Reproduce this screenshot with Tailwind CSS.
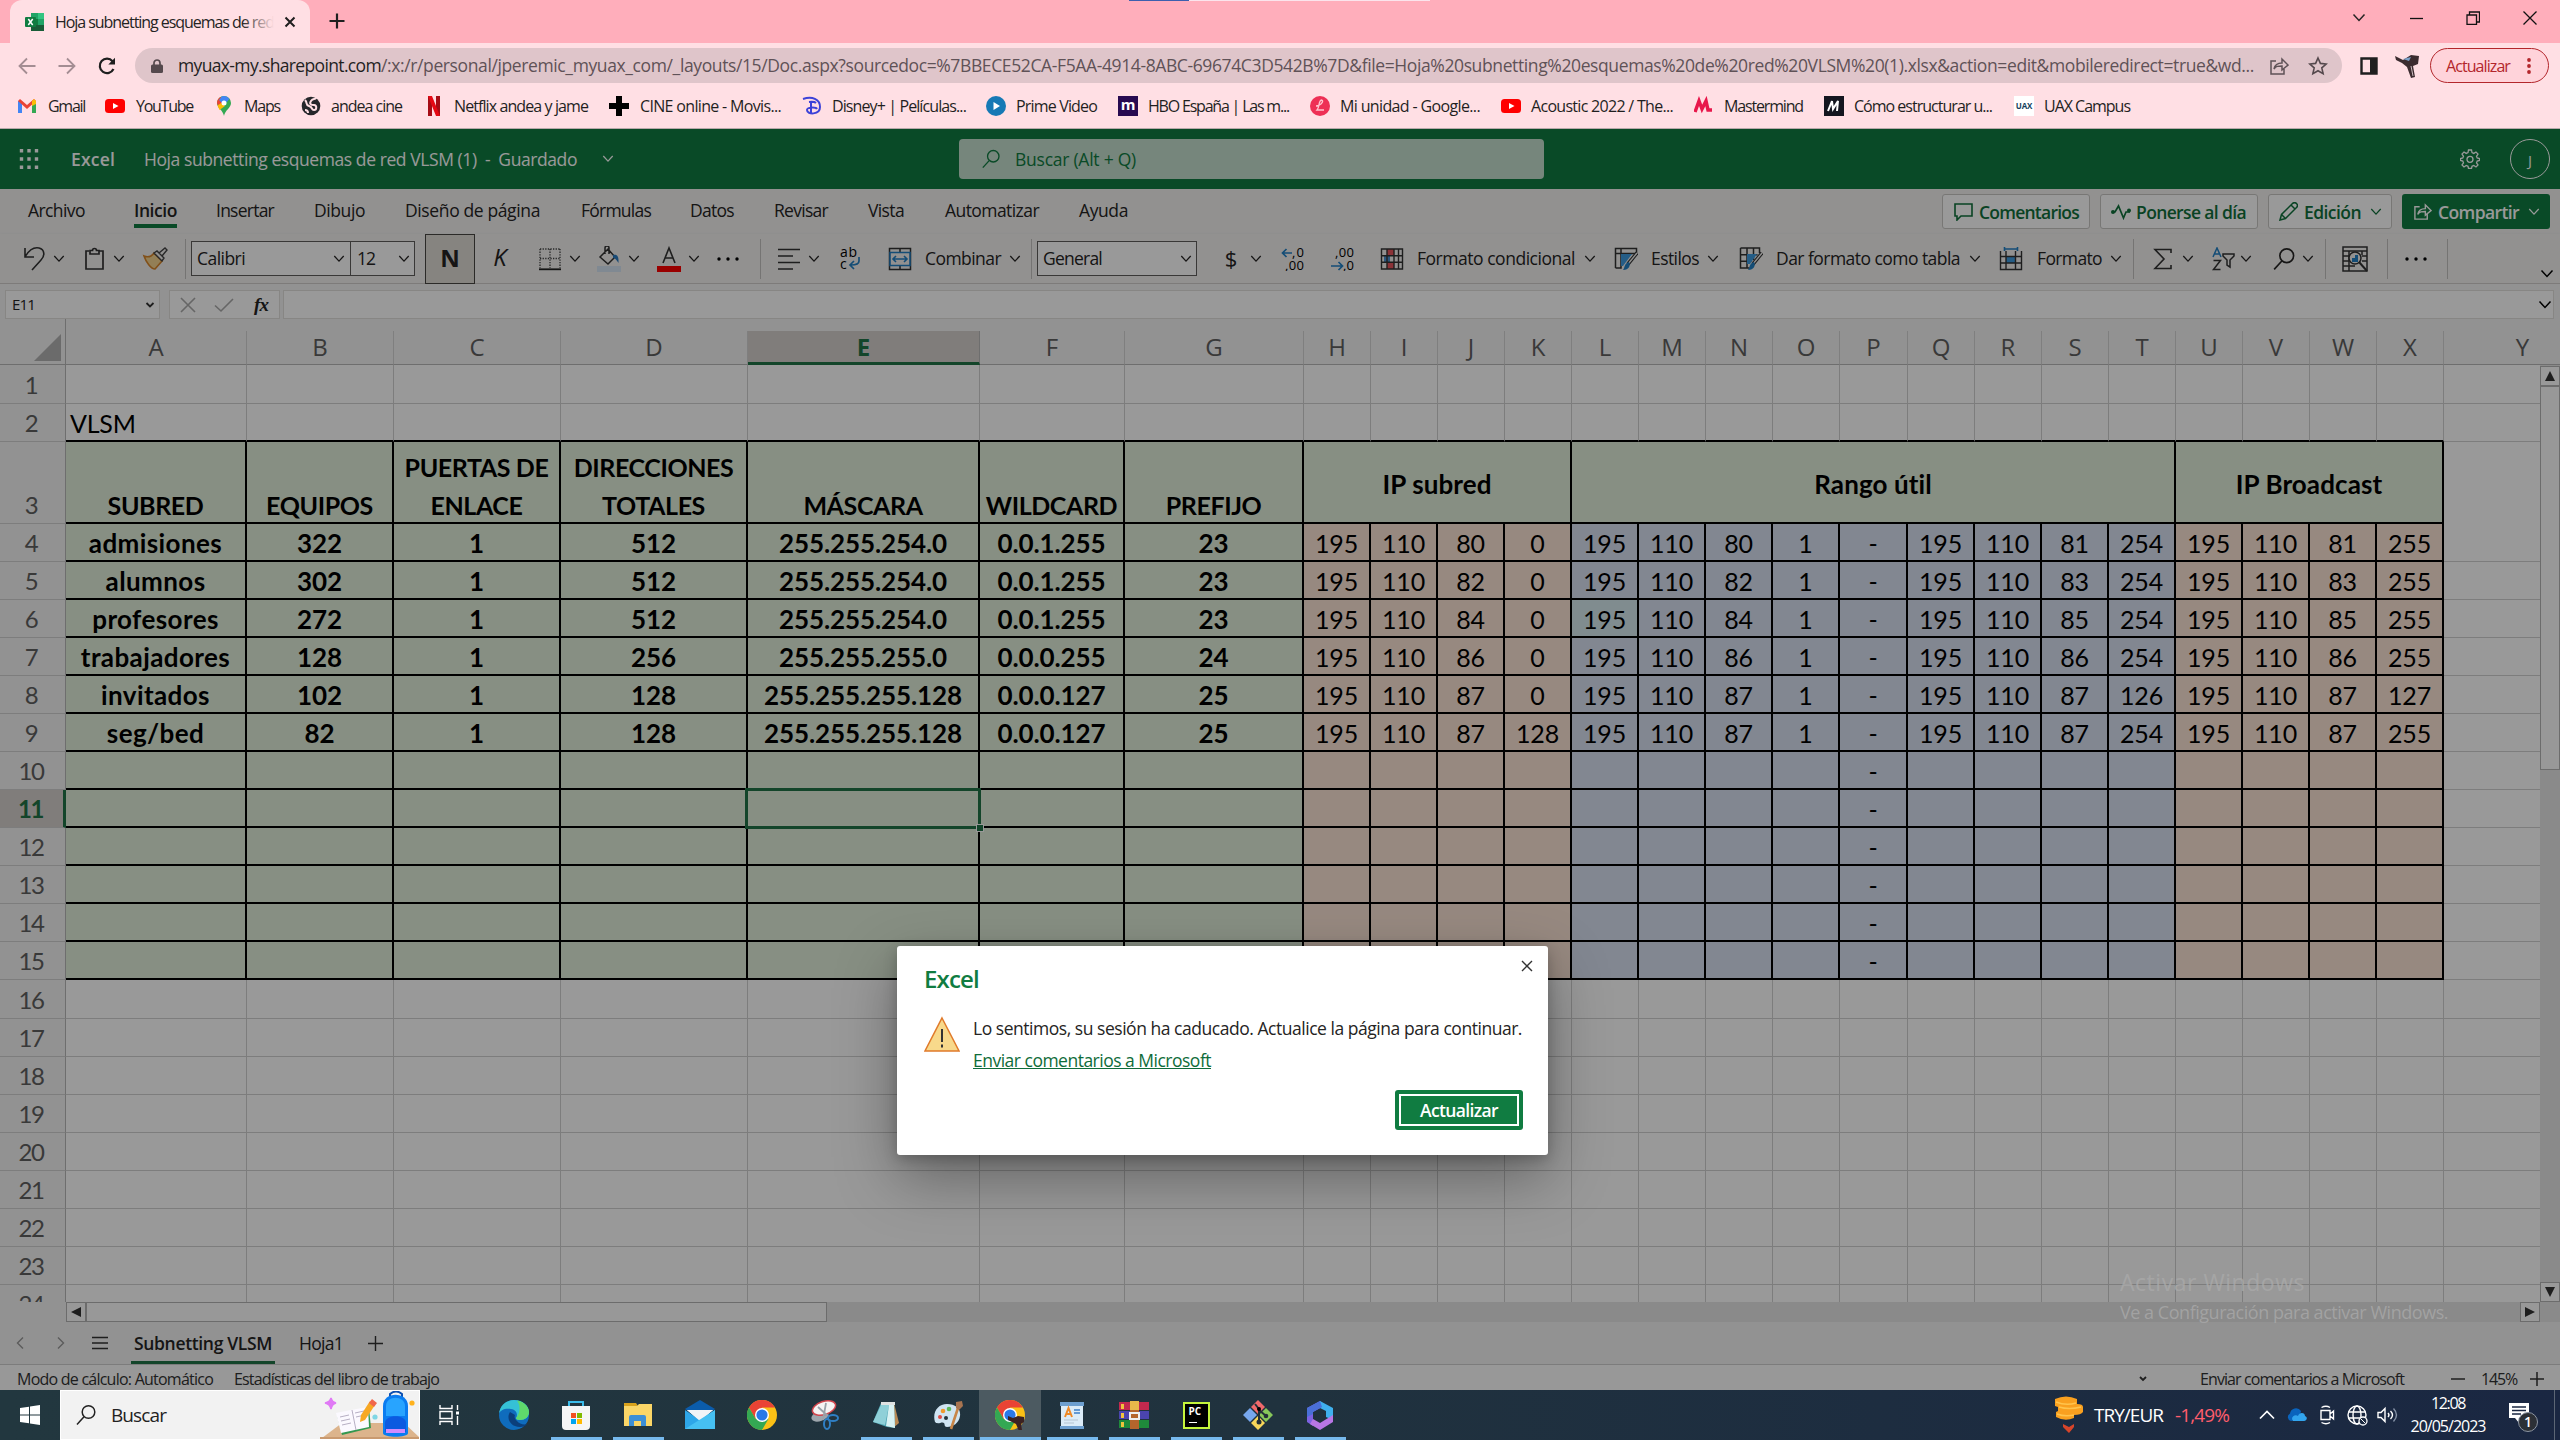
<!DOCTYPE html>
<html lang="es">
<head>
<meta charset="utf-8">
<title>Hoja subnetting esquemas de red VLSM (1)</title>
<script src="https://cdn.jsdelivr.net/npm/@tailwindcss/browser@4"></script>
</head>
<body class="w-[2560px] h-[1440px] overflow-hidden bg-white font-['Open_Sans','Noto_Sans',sans-serif] text-[17.5px] text-[#252423]">

<svg class="hidden">
  <symbol id="chev" viewBox="0 0 14 14"><path d="M1.5 3.5 7 9.5 12.5 3.5" fill="none" stroke="currentColor" stroke-width="1.5"/></symbol>
  <symbol id="share" viewBox="0 0 20 20"><path d="M7 5H2v13h13v-5M5 13c1-5 4-6 8-6V3l6 6-6 5v-4c-4 0-6 0-8 3z" fill="none" stroke="currentColor" stroke-width="1.5"/></symbol>
  <symbol id="mag" viewBox="0 0 22 22"><circle cx="13.5" cy="8" r="6.3" fill="none" stroke="currentColor" stroke-width="1.5"/><path d="M9 12.8 2 20.5" stroke="currentColor" stroke-width="1.5"/></symbol>
  <symbol id="tube" viewBox="0 0 20 20"><rect y="3" width="20" height="14" rx="3.5" fill="#f00"/><path d="M8 7l5.5 3L8 13z" fill="#fff"/></symbol>
  <symbol id="chrome" viewBox="0 0 30 30"><circle cx="15" cy="15" r="15" fill="#fbc116"/><path d="M2 7.5A15 15 0 0 1 28 7.5H15L8.5 19z" fill="#ea4335"/><path d="M2 7.5A15 15 0 0 0 15 30l6.5-11.3L8.5 18.7z" fill="#34a853"/><circle cx="15" cy="15" r="7" fill="#fff"/><circle cx="15" cy="15" r="5.6" fill="#2a79e8"/></symbol>
  <symbol id="paint" viewBox="0 0 24 24"><path d="M1.500 1h19v5M1.500 1v20h9M1.500 7.700h17M1.500 14.300h11M8 1v20M14.500 1v12" fill="none" stroke="#333" stroke-width="1.500"/><path d="M8 7h10l-7 10H8z" fill="#3f9be0"/><path d="M23 6 14 17" stroke="#333" stroke-width="3.600"/><path d="M23 6 14 17" stroke="#f3f2f1" stroke-width="1.400"/><path d="M15 15c2 3 0 8-6 8 2-2 1-7 6-8z" fill="#2280c5"/></symbol>
</svg>

<div class="relative flex h-full w-full flex-col [&_svg]:shrink-0">

<!-- Tab strip -->
<div class="flex h-[43px] shrink-0 bg-[#ffaebb] text-[16px] leading-[42px]">
  <div class="ml-[10px] flex w-[300px] items-center rounded-t-[12px] bg-[#ffdfe4]">
    <svg class="ml-[15px] h-5 w-5 shrink-0" viewBox="0 0 20 20"><path d="M6 1h13v18H6z" fill="#21a366"/><path d="M13 1h6v6h-6z" fill="#33c481"/><path d="M6 7h7v6H6z" fill="#107c41"/><path d="M13 13h6v6H6v-6z" fill="#185c37"/><rect y="5" width="11" height="10" rx="1" fill="#107c41"/><path d="M3.300 7l4.400 6M7.700 7l-4.400 6" stroke="#fff" stroke-width="1.500"/></svg>
    <div class="relative ml-[10px] w-[219px] overflow-hidden whitespace-nowrap"><span data-w="219">Hoja subnetting esquemas de red</span><div class="absolute inset-y-0 right-0 w-8 bg-linear-to-r from-transparent to-[#ffdfe4]"></div></div>
    <svg class="ml-[10px] h-3 w-3" viewBox="0 0 12 12"><path d="M1.500 1.500l9 9M10.500 1.500l-9 9" stroke="#1f1f1f" stroke-width="2"/></svg>
  </div>
  <svg class="mt-[13px] ml-[19px] h-4 w-4" viewBox="0 0 16 16"><path d="M8 .5v15M.5 8h15" stroke="#1f1f1f" stroke-width="2.200"/></svg>
  <div class="ml-[784px] h-px w-[60px] bg-[#3c5fae]"></div><div class="h-px w-[241px] bg-[#fbe4ec]"></div>
  <svg class="mt-[11px] ml-[922px] h-[14px] w-[14px]"><use href="#chev"/></svg>
  <svg class="mt-[11px] ml-[43px] h-[14px] w-[14px]" viewBox="0 0 14 14"><path d="M1 7.500h13" stroke="#111" stroke-width="1.300"/></svg>
  <svg class="mt-[11px] ml-[43px] h-[14px] w-[14px]" viewBox="0 0 14 14"><path d="M1 4h9.500v9.500H1zM3.500 4V1h10v10h-3" fill="none" stroke="#111" stroke-width="1.300"/></svg>
  <svg class="mt-[11px] ml-[43px] h-[14px] w-[14px]" viewBox="0 0 14 14"><path d="M.5.5l13 13M13.500.5l-13 13" stroke="#111" stroke-width="1.300"/></svg>
</div>

<!-- Address bar -->
<div class="flex h-[45px] shrink-0 items-center bg-[#ffdfe4] text-[#5f5257]">
  <svg class="ml-[18px] h-[18px] w-[18px]" viewBox="0 0 18 18"><path d="M17.500 9H1.500M9 1.500 1.500 9 9 16.500" fill="none" stroke="#a48d93" stroke-width="1.800"/></svg>
  <svg class="ml-[22px] h-[18px] w-[18px]" viewBox="0 0 18 18"><path d="M.5 9h16M9 1.500 16.500 9 9 16.500" fill="none" stroke="#a48d93" stroke-width="1.800"/></svg>
  <svg class="ml-[22px] h-[18px] w-[18px]" viewBox="0 0 18 18"><path d="M15.500 12A7.200 7.200 0 1 1 14.500 4.200" fill="none" stroke="#1f1f1f" stroke-width="2.200"/><path d="M17 .8v6.700h-6.700z" fill="#1f1f1f"/></svg>
  <div class="ml-[19px] flex h-[35px] w-[2207px] shrink-0 items-center rounded-full bg-[#dfc5ca] leading-[35px] whitespace-nowrap">
    <svg class="ml-[16px] h-[14px] w-3" viewBox="0 0 12 14"><path d="M3 6V4a3 3 0 0 1 6 0v2" fill="none" stroke="#55494d" stroke-width="1.700"/><rect y="5.500" width="12" height="8.500" rx="1.500" fill="#55494d"/></svg>
    <span data-w="203" class="ml-[15px] text-[#1f1f1f]">myuax-my.sharepoint.com</span><span data-w="1873">/:x:/r/personal/jperemic_myuax_com/_layouts/15/Doc.aspx?sourcedoc=%7BBECE52CA-F5AA-4914-8ABC-69674C3D542B%7D&amp;file=Hoja%20subnetting%20esquemas%20de%20red%20VLSM%20(1).xlsx&amp;action=edit&amp;mobileredirect=true&amp;wd...</span>
    <svg class="ml-[15px] h-5 w-5"><use href="#share"/></svg>
    <svg class="ml-[19px] h-5 w-5" viewBox="0 0 20 20"><path d="M10 2l2.400 5.400 5.800.6-4.400 3.900 1.300 5.800L10 14.700l-5.100 3 1.300-5.800L1.800 8l5.800-.6z" fill="none" stroke="#55494d" stroke-width="1.600"/></svg>
  </div>
  <svg class="ml-[18px] h-[18px] w-[18px]" viewBox="0 0 18 18"><path d="M1.500 1.500h15v15h-15z" fill="#ffdfe4" stroke="#1f1f1f" stroke-width="2.400"/><path d="M10 1h7v16h-7z" fill="#1f1f1f"/></svg>
  <svg class="ml-[17px] h-6 w-[26px]" viewBox="0 0 26 24"><path d="M0 2l8 4 8-5 8 1-1 8-5 2 2 11-4 1-4-11-5-4-6-3z" fill="#3b2b2f"/><path d="M8 5l8-2-2 4z" fill="#7aa0c8"/><path d="M16 12l2 10" stroke="#cdbdc0"/></svg>
  <div class="ml-[9px] flex h-[35px] w-[119px] shrink-0 items-center rounded-full border-[1.5px] border-[#b3262b] bg-[#ffd3da] text-[16px] text-[#b3262b]">
    <span data-w="64" class="ml-[15px]">Actualizar</span>
    <svg class="ml-[17px] h-4 w-1" viewBox="0 0 4 16"><circle cx="2" cy="2" r="1.900" fill="#b3262b"/><circle cx="2" cy="8" r="1.900" fill="#b3262b"/><circle cx="2" cy="14" r="1.900" fill="#b3262b"/></svg>
  </div>
</div>

<!-- Bookmarks -->
<div class="flex h-[41px] shrink-0 items-center border-b border-[#b9a9ab] bg-[#ffdfe4] pb-[4px] pl-[17px] text-[16px] whitespace-nowrap text-[#1f1f1f]">
  <div class="flex w-[88px]"><svg class="mt-0.5 mr-[11px] h-5 w-5" viewBox="0 0 20 20"><path d="M1 17V5h4v12z" fill="#4285f4"/><path d="M15 17V5h4v12z" fill="#34a853"/><path d="M1 5l2-2 7 6 7-6 2 2-9 8z" fill="#ea4335"/><path d="M15 5l2-2 2 2v3l-4 2z" fill="#fbbc04"/></svg><span data-w="37">Gmail</span></div>
  <div class="flex w-[109px]"><svg class="mt-0.5 mr-[11px] h-5 w-5"><use href="#tube"/></svg><span data-w="57">YouTube</span></div>
  <div class="flex w-[87px]"><svg class="mt-0.5 mr-[10px] h-5 w-5" viewBox="0 0 20 20"><path d="M10 20C9 14 3 12 3 7a7 7 0 0 1 14 0c0 5-6 7-7 13z" fill="#34a853"/><path d="M3 7a7 7 0 0 1 3-5.700L14 3 5 12z" fill="#ea4335"/><path d="M8 .3A7 7 0 0 1 15.500 3L10 9 5 4z" fill="#4285f4"/><path d="M3.500 9.500 7 7l4 3-5.500 4z" fill="#fbbc04"/><circle cx="10" cy="7" r="2.500" fill="#fff"/></svg><span data-w="36">Maps</span></div>
  <div class="flex w-[123px]"><svg class="mt-0.5 mr-[10px] h-5 w-5" viewBox="0 0 20 20"><circle cx="10" cy="10" r="9.300" fill="#25262a"/><path d="M4 4c3 3 0 5 4 6s2 4 5 4 3-5 0-5-5-1-3-4 4-1 5-3M4 14c2 0 3 1 3 3" fill="none" stroke="#ffdfe4" stroke-width="2"/></svg><span data-w="71">andea cine</span></div>
  <div class="flex w-[185px]"><svg class="mt-0.5 mr-[10px] h-5 w-5" viewBox="0 0 20 20"><path d="M4 0h4v20H4zM12 0h4v20h-4z" fill="#a50c15"/><path d="M4 0h4l8 20h-4z" fill="#e50914"/></svg><span data-w="134">Netflix andea y jame</span></div>
  <div class="flex w-[193px]"><svg class="mt-0.5 mr-[11px] h-5 w-5" viewBox="0 0 20 20"><path d="M7 0h6v20H7zM0 7h20v6H0z"/></svg><span data-w="141">CINE online - Movis...</span></div>
  <div class="flex w-[184px]"><svg class="mt-0.5 mr-[10px] h-5 w-5" viewBox="0 0 20 20"><path d="M1 3c9-3 17 0 17 8 0 8-13 8-13 3 0-3 9-3 10-1M9 6v12M7 6c4-.5 6 0 7 1" fill="none" stroke="#3c42d8" stroke-width="2"/></svg><span data-w="134">Disney+ | Películas...</span></div>
  <div class="flex w-[132px]"><svg class="mt-0.5 mr-[10px] h-5 w-5" viewBox="0 0 20 20"><circle cx="10" cy="10" r="10" fill="#1679b5"/><path d="M7.500 6l6.500 4-6.500 4z" fill="#fff"/></svg><span data-w="81">Prime Video</span></div>
  <div class="flex w-[192px]"><div class="mt-0.5 mr-[10px] h-5 w-5 bg-[#280a50] text-center text-[15px] leading-4 font-bold text-white">m</div><span data-w="141">HBO España | Las m...</span></div>
  <div class="flex w-[191px]"><svg class="mt-0.5 mr-[10px] h-5 w-5" viewBox="0 0 20 20"><circle cx="10" cy="10" r="10" fill="#ee2f55"/><path d="M12 4c-4 0-2 7-5 10h7M12 4c2 2-2 6-6 6" fill="none" stroke="#ffc4ce" stroke-width="1.300"/></svg><span data-w="140">Mi unidad - Google...</span></div>
  <div class="flex w-[193px]"><svg class="mt-0.5 mr-[10px] h-5 w-5"><use href="#tube"/></svg><span data-w="142">Acoustic 2022 / The...</span></div>
  <div class="flex w-[130px]"><svg class="mt-0.5 mr-[10px] h-5 w-5" viewBox="0 0 20 20"><path d="M1 16 5 5l3 8 4-8 2 9h4" fill="none" stroke="#e8174b" stroke-width="3.500"/></svg><span data-w="79">Mastermind</span></div>
  <div class="flex w-[190px]"><svg class="mt-0.5 mr-[10px] h-5 w-5" viewBox="0 0 20 20"><path d="M0 0h20v20H0z" fill="#14161f"/><path d="M4 15 8 5l1 8 5-8-1 10" fill="none" stroke="#fff" stroke-width="2"/></svg><span data-w="138">Cómo estructurar u...</span></div>
  <div class="flex"><div class="mt-0.5 mr-[10px] h-5 w-5 bg-white text-center text-[8px] leading-5 font-bold tracking-tight text-[#173f5e]">UAX</div><span data-w="86">UAX Campus</span></div>
</div>

<!-- Excel for the web -->
<div class="relative flex h-[1261px] shrink-0 flex-col overflow-hidden bg-[#f3f2f1]">

  <!-- Title bar -->
  <div class="flex h-[60px] shrink-0 items-center bg-[#107c41] whitespace-nowrap text-white">
    <svg class="ml-[19px] h-5 w-5" viewBox="0 0 20 20"><path d="M2.500 0v20M10 0v20M17.500 0v20" stroke="#fff" stroke-width="3.400" stroke-dasharray="3.400 4.900"/></svg>
    <span data-w="44" class="ml-[32px] font-semibold">Excel</span>
    <span data-w="433" class="ml-[29px] whitespace-pre">Hoja subnetting esquemas de red VLSM (1)  -  Guardado</span>
    <svg class="ml-[25px] h-3 w-3"><use href="#chev"/></svg>
    <div class="ml-[345px] flex h-10 w-[585px] shrink-0 items-center rounded bg-[#c5dfcf] text-[#107c41]">
      <svg class="ml-[22px] h-5 w-5"><use href="#mag"/></svg><span data-w="121" class="ml-[14px]">Buscar (Alt + Q)</span>
    </div>
    <svg class="ml-[916px] h-5 w-5" viewBox="0 0 20 20"><path d="M8.500 1h3l.5 2.600 1.800.8L16 3l2 2-1.500 2.300.7 1.700 2.300.5v2l-2.300.6-.7 1.700L18 16l-2 2-2.200-1.500-1.800.8-.5 2.200h-3L8 17.300l-1.800-.8L4 18l-2-2 1.500-2.200-.7-1.700L.5 11.500v-2L2.800 9l.7-1.700L2 5l2-2 2.200 1.400L8 3.600z" fill="none" stroke="#fff" stroke-width="1.300"/><circle cx="10" cy="10.300" r="3" fill="none" stroke="#fff" stroke-width="1.300"/></svg>
    <div class="ml-[30px] h-10 w-10 shrink-0 rounded-full border border-white text-center text-[15px] leading-[40px]">J</div>
  </div>

  <!-- Ribbon tabs -->
  <div class="flex h-[45px] shrink-0 pl-[28px] leading-[42px] whitespace-nowrap">
    <div class="w-[106px]"><span data-w="57">Archivo</span></div>
    <div class="w-[82px]"><div class="h-[39px] w-[43px] border-b-4 border-[#107c41] font-semibold"><span data-w="43">Inicio</span></div></div>
    <div class="w-[98px]"><span data-w="58">Insertar</span></div>
    <div class="w-[91px]"><span data-w="51">Dibujo</span></div>
    <div class="w-[176px]"><span data-w="135">Diseño de página</span></div>
    <div class="w-[109px]"><span data-w="70">Fórmulas</span></div>
    <div class="w-[84px]"><span data-w="44">Datos</span></div>
    <div class="w-[94px]"><span data-w="54">Revisar</span></div>
    <div class="w-[77px]"><span data-w="36">Vista</span></div>
    <div class="w-[134px]"><span data-w="94">Automatizar</span></div>
    <div class="w-[863px]"><span data-w="49">Ayuda</span></div>
    <div class="mt-[5px] flex h-[35px] shrink-0 items-center gap-[10px] font-semibold text-[#0f703b]">
      <div class="flex h-full w-[148px] items-center rounded-[3px] border border-[#c8c6c4] bg-white pl-[11px]">
        <svg class="mr-[6px] h-[18px] w-[19px]" viewBox="0 0 19 18"><path d="M1 1h17v12H7l-4 4v-4H1z" fill="none" stroke="currentColor" stroke-width="1.600"/></svg><span data-w="100">Comentarios</span></div>
      <div class="flex h-full w-[158px] items-center rounded-[3px] border border-[#c8c6c4] bg-white pl-[10px]">
        <svg class="mr-[5px] h-[16px] w-[20px]" viewBox="0 0 20 16"><path d="M1 8h3l3.500-6 5 12L15 8h4" fill="none" stroke="currentColor" stroke-width="1.700"/><circle cx="2" cy="8" r="2" fill="currentColor"/><circle cx="18" cy="6.500" r="2" fill="currentColor"/></svg><span data-w="110">Ponerse al día</span></div>
      <div class="flex h-full w-[124px] items-center rounded-[3px] border border-[#c8c6c4] bg-white pl-[10px]">
        <svg class="mr-[6px] h-[19px] w-[19px]" viewBox="0 0 19 19"><path d="M1 18l1.500-5.500L13.500 1.500a2.500 2.500 0 0 1 4 4L6.500 16.500zM12 3l4 4M2.500 12.500l4 4" fill="none" stroke="currentColor" stroke-width="1.500"/></svg><span data-w="57">Edición</span><svg class="ml-[9px] h-3 w-3"><use href="#chev"/></svg></div>
      <div class="flex h-full w-[148px] items-center rounded-[3px] bg-[#107c41] pl-[11px] text-white">
        <svg class="mr-[6px] h-[19px] w-[19px]"><use href="#share"/></svg><span data-w="81">Compartir</span><svg class="ml-[9px] h-3 w-3"><use href="#chev"/></svg></div>
    </div>
  </div>

  <!-- Ribbon commands -->
  <div class="flex h-[50px] shrink-0 items-center border-b border-[#d0cecc] whitespace-nowrap shadow-[0_2px_4px_rgba(0,0,0,0.15)] [&>*]:shrink-0">
    <svg class="ml-[20px] h-[26px] w-[28px]" viewBox="0 0 28 26"><path d="M5 2v9h9M5 11C9 4 14 1 19 2c6 1.500 6 8 2 12l-9 10" fill="none" stroke="#333" stroke-width="1.600"/></svg>
    <div class="flex w-[22px] justify-center"><svg class="h-3 w-3"><use href="#chev"/></svg></div>
    <svg class="ml-[12px] h-[24px] w-6" viewBox="0 0 24 24"><path d="M7 4H4v18h17V4h-4M8 7V3.500h2.500a2 2 0 0 1 4 0H17V7z" fill="none" stroke="#333" stroke-width="1.700"/></svg>
    <div class="ml-[2px] flex w-[22px] justify-center"><svg class="h-3 w-3"><use href="#chev"/></svg></div>
    <svg class="ml-[12px] h-[24px] w-[28px]" viewBox="0 0 28 24"><path d="M2 9c5 2 8 0 10-3l8 8-7 8C9 22 4 15 2 9z" fill="#f6d48f" stroke="#d8852b" stroke-width="1.600"/><path d="M12 6l3-2 7 7-2 3zM17 6l6-5 2 2-5 6" fill="#f3f2f1" stroke="#444" stroke-width="1.400"/></svg>
    <div class="ml-[15px] h-10 w-px bg-[#c4c2c0]"></div>
    <div class="ml-[5px] flex h-[35px] w-[160px] items-center border border-[#605e5c] bg-white pr-[9px] pl-[5px]"><span data-w="48" class="mr-auto">Calibri</span><svg class="h-3 w-3 -mr-1"><use href="#chev"/></svg></div>
    <div class="-ml-px flex h-[35px] w-[65px] items-center border border-[#605e5c] bg-white pr-[4px] pl-[6px]"><span data-w="18" class="mr-auto">12</span><svg class="h-3 w-3"><use href="#chev"/></svg></div>
    <div class="ml-[10px] h-[50px] w-[50px] border border-[#484644] bg-[#dfddd5] text-center text-[24px] leading-[46px] font-bold">N</div>
    <div class="w-[50px] pb-1 text-center text-[24px] italic">K</div>
    <svg class="ml-[13px] h-6 w-6" viewBox="0 0 24 24"><path d="M2 2h20M2 11.500h20M2 2v19M12 2v19M22 2v19" fill="none" stroke="#444" stroke-width="1.300" stroke-dasharray="1.300 1.300"/><path d="M1 22.300h22" stroke="#222" stroke-width="1.800"/></svg>
    <div class="ml-[2px] flex w-[22px] justify-center"><svg class="h-3 w-3"><use href="#chev"/></svg></div>
    <svg class="ml-[10px] h-[26px] w-[26px]" viewBox="0 0 26 26"><path d="M4 11 12 3l7 8-7 7zM9 8V2a2 2 0 0 1 4 0v6" fill="none" stroke="#333" stroke-width="1.500"/><path d="M17 9c4-1 6 1 5.500 8-2-3-3-5-5.500-5z" fill="#2b7cc4"/><path d="M1 20h24v6H1z" fill="#d5e5f3"/></svg>
    <div class="ml-[1px] flex w-[22px] justify-center"><svg class="h-3 w-3"><use href="#chev"/></svg></div>
    <svg class="ml-[11px] h-[26px] w-[26px]" viewBox="0 0 26 26"><path d="M7 17 13 2l6 15M9 12h8" fill="none" stroke="#333" stroke-width="1.600"/><path d="M1 20h24v6H1z" fill="#ff0000"/></svg>
    <div class="ml-[1px] flex w-[22px] justify-center"><svg class="h-3 w-3"><use href="#chev"/></svg></div>
    <svg class="ml-[11px] h-6 w-6" viewBox="0 0 24 24"><circle cx="3" cy="12" r="1.700"/><circle cx="12" cy="12" r="1.700"/><circle cx="21" cy="12" r="1.700"/></svg>
    <div class="ml-[20px] h-10 w-px bg-[#c4c2c0]"></div>
    <svg class="ml-[16px] h-6 w-6" viewBox="0 0 24 24"><path d="M1 2.500h22M1 9h15M1 15.500h22M1 22h15" stroke="#333" stroke-width="1.600"/></svg>
    <div class="ml-[2px] flex w-[22px] justify-center"><svg class="h-3 w-3"><use href="#chev"/></svg></div>
    <svg class="ml-[13px] h-[24px] w-6" viewBox="0 0 24 24"><text x="2" y="10" font-size="14" textLength="17">ab</text><text x="2" y="22" font-size="14">c</text><path d="M21 10v4c0 3-3 4-8 4M16 14l-4 4 4 4" fill="none" stroke="#2280c5" stroke-width="1.700"/></svg>
    <svg class="ml-[26px] h-6 w-6" viewBox="0 0 24 24"><path d="M1.500 1.500h21v21h-21zM12 1.500v4M12 18.500v4" fill="none" stroke="#333" stroke-width="1.500"/><path d="M2 5.500h20v13H2z" fill="#f3f2f1" stroke="#2280c5" stroke-width="1.600"/><path d="M5 12h14M8 9l-3 3 3 3M16 9l3 3-3 3" fill="none" stroke="#2280c5" stroke-width="1.600"/></svg>
    <span data-w="76" class="ml-[13px]">Combinar</span>
    <div class="ml-[3px] flex w-[22px] justify-center"><svg class="h-3 w-3"><use href="#chev"/></svg></div>
    <div class="ml-[5px] h-10 w-px bg-[#c4c2c0]"></div>
    <div class="ml-[5px] flex h-[35px] w-[160px] items-center border border-[#605e5c] bg-white pr-[4px] pl-[5px]"><span data-w="59" class="mr-auto">General</span><svg class="h-3 w-3"><use href="#chev"/></svg></div>
    <div class="ml-[24px] w-5 text-center text-[22px]">$</div>
    <div class="ml-[4px] flex w-[22px] justify-center"><svg class="h-3 w-3"><use href="#chev"/></svg></div>
    <svg class="ml-[14px] h-6 w-6" viewBox="0 0 24 24"><text x="11" y="10" font-size="13" textLength="12">,0</text><text x="4" y="23" font-size="13" textLength="19">,00</text><path d="M11 6H1.500M5.500 2l-4 4 4 4" fill="none" stroke="#2280c5" stroke-width="1.700"/></svg>
    <svg class="ml-[26px] h-6 w-6" viewBox="0 0 24 24"><text x="4" y="10" font-size="13" textLength="19">,00</text><text x="12" y="23" font-size="13" textLength="11">,0</text><path d="M0 19h11.500M7.500 15l4 4-4 4" fill="none" stroke="#2280c5" stroke-width="1.700"/></svg>
    <svg class="ml-[25px] h-6 w-6" viewBox="0 0 24 24"><path d="M7 2h7v7H7zM7 15h7v7H7z" fill="#e8545c"/><path d="M4 9h6v6H4z" fill="#4a90d0"/><path d="M1.500 2h21v20h-21zM1.500 8.700h21M1.500 15.300h21M7 2v20M14 2v20M18.500 2v20" fill="none" stroke="#333" stroke-width="1.400"/></svg>
    <span data-w="158" class="ml-[13px]">Formato condicional</span>
    <div class="ml-[4px] flex w-[22px] justify-center"><svg class="h-3 w-3"><use href="#chev"/></svg></div>
    <svg class="ml-[13px] h-6 w-6" viewBox="0 0 24 24"><path d="M1.500 21V1.500h21V6M1.500 6.500h20M7 1.500V21H1.500" fill="none" stroke="#333" stroke-width="1.500"/><path d="M7 7h11L9 19H7z" fill="#3f9be0"/><path d="M23 6 14 17" stroke="#333" stroke-width="3.600"/><path d="M23 6 14 17" stroke="#f3f2f1" stroke-width="1.400"/><path d="M15 15c2 3 0 8-6 8 2-2 1-7 6-8z" fill="#2280c5"/></svg>
    <span data-w="48" class="ml-[13px]">Estilos</span>
    <div class="ml-[3px] flex w-[22px] justify-center"><svg class="h-3 w-3"><use href="#chev"/></svg></div>
    <svg class="ml-[15px] h-6 w-6"><use href="#paint"/></svg>
    <span data-w="184" class="ml-[13px]">Dar formato como tabla</span>
    <div class="ml-[4px] flex w-[22px] justify-center"><svg class="h-3 w-3"><use href="#chev"/></svg></div>
    <svg class="ml-[13px] h-6 w-6" viewBox="0 0 24 24"><path d="M7 9h9v7H7z" fill="#3f9be0"/><path d="M1.500 4v18.500h21V4M1.500 9.500h21M1.500 16h21M7 4v18M16.500 4v18" fill="none" stroke="#333" stroke-width="1.400"/><path d="M5.500 2h13M5.500 0v4M18.500 0v4" stroke="#2280c5" stroke-width="1.600"/></svg>
    <span data-w="65" class="ml-[14px]">Formato</span>
    <div class="ml-[3px] flex w-[22px] justify-center"><svg class="h-3 w-3"><use href="#chev"/></svg></div>
    <div class="ml-[6px] h-10 w-px bg-[#c4c2c0]"></div>
    <svg class="ml-[17px] h-6 w-6" viewBox="0 0 24 24"><path d="M20 6V2.500H4l9 9.500-9 9.500h16V18" fill="none" stroke="#333" stroke-width="1.600"/></svg>
    <div class="ml-[2px] flex w-[22px] justify-center"><svg class="h-3 w-3"><use href="#chev"/></svg></div>
    <svg class="ml-[12px] h-6 w-6" viewBox="0 0 24 24"><path d="M2 10 6 1l4 9M3.500 7h5" fill="none" stroke="#2280c5" stroke-width="1.500"/><path d="M2.500 13.500h7l-7 9h7" fill="none" stroke="#333" stroke-width="1.500"/><path d="M12 7h11v2l-4 4v7l-3-2v-5l-4-4z" fill="none" stroke="#333" stroke-width="1.500"/></svg>
    <div class="flex w-[22px] justify-center"><svg class="h-3 w-3"><use href="#chev"/></svg></div>
    <svg class="ml-[15px] h-6 w-6"><use href="#mag"/></svg>
    <div class="ml-[1px] flex w-[22px] justify-center"><svg class="h-3 w-3"><use href="#chev"/></svg></div>
    <div class="ml-[6px] h-10 w-px bg-[#c4c2c0]"></div>
    <svg class="ml-[16px] h-[26px] w-[26px]" viewBox="0 0 26 26"><path d="M1 1h24v24H1zM1 5h24M1 10h6M1 15h6M1 20h12M20 10h5M20 15h5M7 5v20M20 5v4" fill="none" stroke="#333" stroke-width="1.500"/><circle cx="13" cy="12" r="6" fill="#f3f2f1" stroke="#333" stroke-width="1.500"/><path d="M17 16l8 9" stroke="#333" stroke-width="2"/><path d="M10 12h3v4h-3zM13 9h3v7h-3z" fill="#2280c5"/></svg>
    <div class="ml-[19px] h-10 w-px bg-[#c4c2c0]"></div>
    <svg class="ml-[16px] h-6 w-6" viewBox="0 0 24 24"><circle cx="3" cy="12" r="1.700"/><circle cx="12" cy="12" r="1.700"/><circle cx="21" cy="12" r="1.700"/></svg>
    <div class="ml-[19px] h-10 w-px bg-[#c4c2c0]"></div>
    <svg class="mt-[30px] ml-[92px] h-[14px] w-[14px] text-black"><use href="#chev"/></svg>
  </div>

  <!-- Formula bar -->
  <div class="flex h-[35px] shrink-0 bg-[#f3f3f3] pt-[6px]">
    <div class="ml-[5px] flex h-[29px] w-[155px] items-center border border-[#e1dfdd] bg-white pl-[6px] text-[15px]"><span data-w="23">E11</span><svg class="ml-[110px] h-2.5 w-2.5" viewBox="0 0 10 10"><path d="M1.500 3 5 6.500 8.500 3" fill="none" stroke="#333" stroke-width="1.800"/></svg></div>
    <div class="ml-[9px] flex h-[29px] w-[111px] items-center border border-[#e1dfdd] bg-white">
      <svg class="ml-[10px] h-4 w-4" viewBox="0 0 16 16"><path d="M1 1l14 14M15 1 1 15" stroke="#aaa" stroke-width="1.600"/></svg>
      <svg class="ml-[18px] h-4 w-5" viewBox="0 0 20 16"><path d="M1 8.500l6 5.500L19 2" fill="none" stroke="#aaa" stroke-width="1.600"/></svg>
      <span class="ml-[20px] font-['Liberation_Serif',serif] text-[19px] leading-6 font-bold tracking-tighter italic">fx</span>
    </div>
    <div class="ml-[3px] flex h-[29px] w-[2271px] items-center justify-end border border-[#e1dfdd] bg-white pr-[1px]"><svg class="h-[14px] w-[14px] text-black"><use href="#chev"/></svg></div>
  </div>

  <!-- Sheet -->
  <div id="sheet" class="relative h-[983px] shrink-0 overflow-hidden bg-[#f3f3f3]">
    <div id="heads" class="flex h-[46px] w-[2700px] items-end text-[24px]"></div>
    <div class="flex h-[937px]">
      <div id="grid" class="h-full w-[2540px] shrink-0 overflow-hidden bg-white"></div>
      <div class="flex w-5 flex-col bg-[#e6e6e6] pt-px">
        <div class="flex h-5 items-center justify-center border border-[#b5b5b5] bg-white"><svg class="h-2.5 w-2.5" viewBox="0 0 10 10"><path d="M5 0l5 10H0z" fill="#333"/></svg></div>
        <div class="h-[384px] border border-[#b5b5b5] bg-[#fdfdfd]"></div>
        <div class="mt-auto flex h-5 items-center justify-center border border-[#b5b5b5] bg-white"><svg class="h-2.5 w-2.5" viewBox="0 0 10 10"><path d="M0 0h10L5 10z" fill="#333"/></svg></div>
      </div>
    </div>
    <!-- Active cell outline -->
    <div class="absolute top-[469px] left-[745px] h-[41px] w-[236px] border-[3px] border-[#217346]"></div>
    <div class="absolute top-[505px] left-[976px] h-[8px] w-[8px] border border-white bg-[#217346]"></div>
  </div>

  <!-- Horizontal scrollbar -->
  <div class="flex h-5 shrink-0 bg-[#f3f3f3] pl-[66px]">
    <div class="flex w-full bg-[#e6e6e6]">
      <div class="flex w-5 items-center justify-center border border-[#b5b5b5] bg-[#fdfdfd]"><svg class="h-2.5 w-2.5" viewBox="0 0 10 10"><path d="M10 0v10L0 5z" fill="#333"/></svg></div>
      <div class="w-[741px] border border-[#b5b5b5] bg-[#fdfdfd]"></div>
      <div class="mr-[20px] ml-auto flex w-5 items-center justify-center border border-[#b5b5b5] bg-[#fdfdfd]"><svg class="h-2.5 w-2.5" viewBox="0 0 10 10"><path d="M0 0v10l10-5z" fill="#333"/></svg></div>
    </div>
  </div>

  <!-- Sheet tabs -->
  <div class="flex h-[43px] shrink-0 items-center border-b border-[#cfcfcf] bg-[#f3f3f3] whitespace-nowrap">
    <svg class="ml-[16px] h-3 w-2" viewBox="0 0 8 12"><path d="M7 .5 1.500 6 7 11.500" fill="none" stroke="#999" stroke-width="1.400"/></svg>
    <svg class="ml-[33px] h-3 w-2" viewBox="0 0 8 12"><path d="M1 .5 6.500 6 1 11.500" fill="none" stroke="#999" stroke-width="1.400"/></svg>
    <svg class="ml-[27px] h-3.5 w-4" viewBox="0 0 16 14"><path d="M0 1.500h16M0 7h16M0 12.500h16" stroke="#333" stroke-width="1.500"/></svg>
    <div class="ml-[23px] h-full w-[144px] border-b-[3px] border-[#217346] text-center leading-[42px] font-semibold"><span data-w="138">Subnetting VLSM</span></div>
    <span data-w="44" class="ml-[24px]">Hoja1</span>
    <svg class="ml-[25px] h-[15px] w-[15px]" viewBox="0 0 15 15"><path d="M7.500 0v15M0 7.500h15" stroke="#333" stroke-width="1.400"/></svg>
  </div>

  <!-- Status bar -->
  <div class="flex h-[25px] shrink-0 items-center bg-[#fdfdfd] pt-[3px] text-[16px] whitespace-nowrap text-[#333]">
    <span data-w="196" class="ml-[17px]">Modo de cálculo: Automático</span>
    <span data-w="205" class="ml-[21px]">Estadísticas del libro de trabajo</span>
    <svg class="ml-[1700px] h-2 w-2" viewBox="0 0 8 8"><path d="M1 2l3 3 3-3" fill="none" stroke="#333" stroke-width="1.800"/></svg>
    <span data-w="204" class="ml-[53px]">Enviar comentarios a Microsoft</span>
    <svg class="ml-[47px] h-[14px] w-[14px]" viewBox="0 0 14 14"><path d="M0 7h14" stroke="#333" stroke-width="1.500"/></svg>
    <span data-w="36" class="ml-[16px]">145%</span>
    <svg class="ml-[13px] h-[14px] w-[14px]" viewBox="0 0 14 14"><path d="M7 0v14M0 7h14" stroke="#333" stroke-width="1.500"/></svg>
  </div>

  <!-- Modal backdrop -->
  <div class="absolute inset-0 bg-black/40"></div>
  <div class="absolute top-[1138px] left-[2120px] whitespace-nowrap text-[#a9a9a9]/80">
    <div class="text-[23px] leading-[30px]"><span data-w="185">Activar Windows</span></div>
    <div class="text-[18px] leading-[30px]"><span data-w="328">Ve a Configuración para activar Windows.</span></div>
  </div>

  <!-- Session dialog -->
  <div class="absolute top-[817px] left-[897px] flex h-[209px] w-[651px] flex-col rounded-[3px] bg-white px-[27px] whitespace-nowrap shadow-[0_22px_60px_rgba(0,0,0,0.35),0_4px_14px_rgba(0,0,0,0.22)]">
    <div class="flex h-[66px] text-[24px] leading-[66px] font-semibold text-[#107c41]"><span data-w="55" class="mr-auto">Excel</span><svg class="mt-[14px] -mr-[12px] h-3 w-3" viewBox="0 0 12 12"><path d="M1 1l10 10M11 1 1 11" stroke="#333" stroke-width="1.400"/></svg></div>
    <div class="flex">
      <svg class="mt-[4px] h-[36px] w-[36px]" viewBox="0 0 36 36"><path d="M18 2 35 35H1z" fill="#f8d98b" stroke="#e07a2a" stroke-width="1.500"/><path d="M18 13v13M18 28.500v3" stroke="#333" stroke-width="2"/></svg>
      <div class="ml-[13px] flex flex-col leading-[32px]"><span data-w="549">Lo sentimos, su sesión ha caducado. Actualice la página para continuar.</span><span data-w="238" class="self-start text-[#0f6c3a] underline">Enviar comentarios a Microsoft</span></div>
    </div>
    <div class="mt-[14px] ml-auto h-10 w-[128px] -mr-0.5 rounded-[3px] bg-[#107c41] p-[4px]"><div class="h-full border-2 border-white text-center leading-[29px] font-semibold text-white"><span data-w="78">Actualizar</span></div></div>
  </div>
</div>

<!-- Taskbar -->
<div class="flex h-[50px] shrink-0 items-center bg-linear-to-r from-[#22373f] via-[#20323e] to-[#1a2742] whitespace-nowrap text-white [&>*]:shrink-0">
  <svg class="ml-[20px] h-5 w-5" viewBox="0 0 20 20"><path d="M0 3l9-1.300v7.800H0zM10 1.500 20 0v9.500H10zM0 10.500h9v7.800L0 17zM10 10.500h10V20l-10-1.500z" fill="#fff"/></svg>
  <div class="ml-[20px] flex h-[50px] w-[360px] items-center border border-[#fff] bg-[#f2f2f2] text-[#222]">
    <svg class="ml-[14px] h-[22px] w-[22px]"><use href="#mag"/></svg>
    <span data-w="55" class="ml-[14px] text-[19px]">Buscar</span>
    <svg class="ml-[154px] h-12 w-[100px]" viewBox="0 0 100 48"><path d="M2 47 22 32h62l15 14v2H2z" fill="#dcb48c"/><path d="M0 46h99v2H0z" fill="#c99a70"/><path d="M11 7q1 4 5 5-4 1-5 6-1-5-6-6 5-1 6-5z" fill="#e07af5" stroke="#e07af5" stroke-width="1.500"/><path d="M17 24 49 17l2 20-29 7z" fill="#33984f"/><path d="M16 22l15-3 17-3 1 20-28 6z" fill="#fbf9ff"/><path d="M32 19l4 20M20 26l9-2M21 30l9-2M22 34l9-2M35 22l9-2M36 26l9-2" stroke="#b7b0c4"/><path d="M41 24 50 10l5 4-10 15-5 2z" fill="#f7a823"/><path d="M49 12l3-4 5 4-3 4z" fill="#f0674b"/><path d="M70 6V3q6-5 12 0v3" stroke="#0d4fb0" stroke-width="2" fill="none"/><path d="M63 42V15c0-15 25-15 25 0v27c0 5-25 5-25 0z" fill="#0a7cf0"/><path d="M66 15c0-11 19-11 19 0v10H66z" fill="#28a4ff"/><path d="M65 41V32c0-9 21-9 21 0v9z" fill="#0c5ae0"/><path d="M66 38h19v4H66z" fill="#cf8bff"/><circle cx="92" cy="12" r="2.600" fill="#ffb21c"/><circle cx="55" cy="26" r="2.600" fill="#7fd6e5"/></svg>
  </div>
  <svg class="ml-[19px] h-5 w-[22px]" viewBox="0 0 22 20"><path d="M1 0v3.500h12V0M1 20v-3.500h12V20M1 6.500h12v7H1zM18.500 0v5M18.500 11v9" fill="none" stroke="#fff" stroke-width="1.400"/><path d="M17 6.500h3v3h-3z" fill="#fff"/></svg>
  <div class="ml-[22px] flex h-[50px] [&>div]:flex [&>div]:w-[62px] [&>div]:items-center [&>div]:justify-center">
    <div><svg class="h-[30px] w-[30px]" viewBox="0 0 30 30"><circle cx="15" cy="15" r="15" fill="#0f6cbd"/><path d="M0 14C1 4 9 0 15 0c9 0 15 6 15 12 0 5-4 8-9 8-3 0-4-1-4-2 2-3 1-8-5-9S1 10 0 14z" fill="#35c1d6"/><path d="M18 .5C26 2 30 8 30 12c0 5-4 8-9 8-3 0-4-1-4-2 4-4 5-12 1-17.500z" fill="#5fd86b"/><path d="M11 12c-4 6 0 15 10 15 3 0 6-1 7-3-3 1-8 0-10-3-2-2-3-3-2-6z" fill="#0b3f7c"/></svg></div>
    <div class="border-b-[3px] border-transparent"><svg class="mt-1 h-[30px] w-[30px]" viewBox="0 0 30 30"><path d="M8 6V1h14v5" fill="none" stroke="#3bbcea" stroke-width="2"/><path d="M1 5h28v20q0 4-4 4H5q-4 0-4-4z" fill="#f5f5f5"/><path d="M10 12h5v5h-5z" fill="#f25022"/><path d="M16 12h5v5h-5z" fill="#7fba00"/><path d="M10 18h5v5h-5z" fill="#00a4ef"/><path d="M16 18h5v5h-5z" fill="#ffb900"/></svg></div>
    <div><svg class="h-[30px] w-[30px]" viewBox="0 0 30 30"><path d="M1 3h12l2 3H1z" fill="#d9a21c"/><path d="M1 6h13l2-2h13v22H1z" fill="#fbd667"/><path d="M6 26V17q0-2 2-2h13q2 0 2 2v9h-5v-5h-7v5z" fill="#3d8fd6"/></svg></div>
    <div><svg class="h-[30px] w-[30px]" viewBox="0 0 30 30"><path d="M0 9 15 0l15 9-15 11z" fill="#0b5cab"/><path d="M2 10h26L15 21z" fill="#f2f4f7"/><path d="M0 10l15 10L30 10v19H0z" fill="#2ea6e8"/><path d="M2 10h26L15 21z" fill="#f2f4f7"/><path d="M0 29 30 10v19z" fill="#46c0f2"/></svg></div>
    <div><svg class="h-[30px] w-[30px]"><use href="#chrome"/></svg></div>
    <div><svg class="h-[30px] w-[30px]" viewBox="0 0 30 30"><ellipse cx="11" cy="16" rx="9" ry="5" fill="#9ea6ad" transform="rotate(-20 11 16)"/><ellipse cx="15" cy="8" rx="12" ry="6.500" fill="#f5f3f3" stroke="#d0444c" stroke-width="1.500" transform="rotate(-18 15 8)"/><path d="M17 3l-3 17M9 7l11 10" stroke="#9aa1a8" stroke-width="1.800"/><ellipse cx="24" cy="18" rx="5" ry="3" fill="none" stroke="#2f7fc4" stroke-width="2"/><ellipse cx="18" cy="24" rx="3" ry="5" fill="none" stroke="#2f7fc4" stroke-width="2"/></svg></div>
    <div><svg class="h-[28px] w-[28px]" viewBox="0 0 28 28"><path d="M22 2l5 20-6 5z" fill="#b98a55"/><path d="M9 2h13l1 25-8-1-14-5z" fill="#4fa5b3"/><path d="M9 4h8l-4 20-12-3z" fill="#8fd0d8"/><path d="M17 4h5l1 23-9-2z" fill="#d9f2f3"/><path d="M9 1h14v3H9z" fill="#dfe3e3"/></svg></div>
    <div><svg class="h-[30px] w-[30px]" viewBox="0 0 30 30"><path d="M14 4c9 0 14 5 13 12s-7 11-13 11c-3 0-2-3-3-4-2-2-6 2-9-1C-1 12 5 4 14 4z" fill="#cfe4f2"/><circle cx="7" cy="17" r="2" fill="#e04a43"/><circle cx="10" cy="11" r="2.300" fill="#f09a2f"/><circle cx="16" cy="9" r="2.300" fill="#5bb85a"/><circle cx="13" cy="18" r="2" fill="#24343d"/><path d="M26 5 18 29" stroke="#c78548" stroke-width="2.600"/><path d="M23 2l6-1 1 5-4 4-3-2z" fill="#a87450"/></svg></div>
    <div class="bg-[#4c5a61]"><svg class="h-[30px] w-[30px]" viewBox="0 0 30 30"><use href="#chrome"/><path d="M13 16l5 2 5-2 6 1v5l-3 2 1 6-3 1-3-7-8-4z" fill="#3b2222"/></svg></div>
    <div><svg class="h-[28px] w-[28px]" viewBox="0 0 28 28"><path d="M3 3h22v23H3z" fill="#dcecf8"/><path d="M2 1h24v4H2zM2 25h24v3H2z" fill="#6d9fd0"/><path d="M7 16 10.500 7l3.500 9M8.500 13h4" fill="none" stroke="#ef8a27" stroke-width="2"/><path d="M16 9h6M16 12h6" stroke="#3c7fc8" stroke-width="1.600"/><path d="M6 19h14M6 22h10" stroke="#b5c4d2"/></svg></div>
    <div><svg class="h-[28px] w-[30px]" viewBox="0 0 30 28"><path d="M0 1h30v8H0z" fill="#c2294e"/><path d="M0 10h30v8H0z" fill="#4a44ad"/><path d="M0 19h30v8H0z" fill="#1f8a3b"/><path d="M2 3h3v5H2zM2 12h3v5H2zM2 21h3v5H2z" fill="#f0c33d"/><path d="M11 0h9v28h-9z" fill="#b5652c"/><path d="M11 0h9v9h-9z" fill="#e8b94a"/><path d="M11 12h9v6h-9z" fill="none" stroke="#eee" stroke-width="2"/></svg></div>
    <div><div class="h-[27px] w-[27px] border-2 border-[#c5f53c] bg-black pl-1 text-[10px] leading-[14px] font-bold">PC<div class="mt-1 h-[1.5px] w-2 bg-white"></div></div></div>
    <div><svg class="h-[30px] w-[30px]" viewBox="0 0 30 30"><path d="M15 0l7 7-7 7-7-7z" fill="#f0696b"/><path d="M7 8l7 7-7 7-7-7z" fill="#77a7ee"/><path d="M23 8l7 7-7 7-7-7z" fill="#86c65a"/><path d="M15 16l7 7-7 7-7-7z" fill="#f8d75a"/><path d="M12 4l4 5v14M16 10l7 6" stroke="#222f38" stroke-width="2" fill="none"/><circle cx="16" cy="9" r="2"/><circle cx="16" cy="22" r="2.500" fill="#222f38"/><circle cx="23" cy="16" r="2.300" fill="#222f38"/></svg></div>
    <div><svg class="h-[30px] w-[28px]" viewBox="0 0 28 30"><path d="M14 1 1 8v14l6 4V12l11-6z" fill="#7d62e2"/><path d="M14 1l13 7v12l-7-3v-6l-8-4z" fill="#3fb0ee"/><path d="M7 19l7 4 13-8v7l-13 8-10-6z" fill="#b876e6"/><path d="M14 1 1 8v9l6-3V12l9-5z" fill="#4a6fd8"/></svg></div>
  </div>
  <div class="ml-[704px] mr-[11px]"><svg class="h-[38px] w-[28px]" viewBox="0 0 28 38"><path d="M0 3q11-5 22 0v5q6 0 6 3v5q-2 3-9 3v3q-9 4-18-1v-5l2-1v-4l-3-1z" fill="#f9a01f"/><path d="M1 6q10 4 20 1M4 11q10 3 22 0M2 18q8 3 17 1" fill="none" stroke="#ffc44d" stroke-width="1.500"/><path d="M8 28l6 3 5-3v3l-5 6-6-6z" fill="#d8452a"/></svg></div>
  <span data-w="69" class="text-[19px]">TRY/EUR</span>
  <span data-w="54" class="ml-[12px] text-[19px] text-[#ff5d6c]">-1,49%</span>
  <svg class="ml-[30px] h-4 w-4" viewBox="0 0 16 16"><path d="M1 11.500 8 4.500l7 7" fill="none" stroke="#fff" stroke-width="1.700"/></svg>
  <svg class="ml-[12px] h-5 w-5" viewBox="0 0 20 20"><path d="M4 16a4 4 0 0 1-1-7.500A6 6 0 0 1 14 6l-2 8z" fill="#0a64bd"/><path d="M6 16c-3-4 2-7 5-5 1-4 7-4 7 0 3 1 2 5-1 5z" fill="#32a5ee"/></svg>
  <svg class="ml-[12px] h-5 w-4" viewBox="0 0 16 20"><path d="M2 5.500h9v9H2zM11 9l3.500-3v8L11 11M2.500 2.500Q7 0 11 2.500M2.500 17.500Q7 20 11 17.500" fill="none" stroke="#fff" stroke-width="1.400"/></svg>
  <svg class="ml-[11px] h-[22px] w-[22px]" viewBox="0 0 22 22"><circle cx="11" cy="11" r="9" fill="none" stroke="#fff" stroke-width="1.400"/><ellipse cx="11" cy="11" rx="4" ry="9" fill="none" stroke="#fff" stroke-width="1.400"/><path d="M2.500 8h17M2.500 14h17" stroke="#fff" stroke-width="1.400"/><circle cx="17" cy="17" r="4" fill="#1c2a40" stroke="#fff" stroke-width="1.300"/><path d="M14.500 14.500l5 5" stroke="#fff"/></svg>
  <svg class="ml-[9px] h-5 w-[21px]" viewBox="0 0 21 20"><path d="M1 7.500h3l4-4v13l-4-4H1zM11 8q2 2 0 4M13.500 6q4 4 0 8" fill="none" stroke="#fff" stroke-width="1.400"/><path d="M16.500 3.500q6 6.500 0 13" fill="none" stroke="#8390a5" stroke-width="1.400"/></svg>
  <div class="ml-[12px] flex w-[76px] flex-col items-center text-[16px] leading-[23px]"><span data-w="34">12:08</span><span data-w="75">20/05/2023</span></div>
  <div class="relative ml-[23px] mb-[5px] h-5 w-5"><svg class="h-5 w-5" viewBox="0 0 20 20"><path d="M0 0h20v15H10v5l-4-5H0z" fill="#fff"/><path d="M3 4h14M3 7.500h14M3 11h9" stroke="#1a2742" stroke-width="1.300"/></svg><div class="absolute top-[9px] left-[9px] h-5 w-5 rounded-full border border-[#8d96a3] bg-[#2c3036] text-center text-[14px] leading-[17px] font-semibold">1</div></div>
  <div class="ml-[25px] h-full w-px bg-[#5c6675]"></div>
</div>

<!-- Running-app indicators -->
<div class="absolute bottom-0 left-[551px] flex h-[3px] [&>div]:bg-[#76b9ed]">
  <div class="w-[51px]"></div><div class="ml-[11px] w-[51px]"></div><div class="ml-[197px] w-[51px]"></div><div class="ml-[11px] w-[51px]"></div><div class="ml-[6px] w-[61px]"></div><div class="ml-[6px] w-[51px]"></div><div class="ml-[11px] w-[51px]"></div><div class="ml-[11px] w-[51px]"></div><div class="ml-[11px] w-[51px]"></div><div class="ml-[11px] w-[51px]"></div>
</div>
</div>

<script>
const widths = {A:181,B:147,C:167,D:187,E:232,F:145,G:179,H:67,I:67,J:67,K:67,L:67,M:67,N:67,O:67,P:68,Q:67,R:67,S:67,T:67,U:67,V:67,W:67,X:67,Y:158};
const cols = Object.keys(widths);
const data = {
  4:['admisiones','322','1','512','255.255.254.0','0.0.1.255','23',195,110,80,0,195,110,80,1,'-',195,110,81,254,195,110,81,255],
  5:['alumnos','302','1','512','255.255.254.0','0.0.1.255','23',195,110,82,0,195,110,82,1,'-',195,110,83,254,195,110,83,255],
  6:['profesores','272','1','512','255.255.254.0','0.0.1.255','23',195,110,84,0,195,110,84,1,'-',195,110,85,254,195,110,85,255],
  7:['trabajadores','128','1','256','255.255.255.0','0.0.0.255','24',195,110,86,0,195,110,86,1,'-',195,110,86,254,195,110,86,255],
  8:['invitados','102','1','128','255.255.255.128','0.0.0.127','25',195,110,87,0,195,110,87,1,'-',195,110,87,126,195,110,87,127],
  9:['seg/bed','82','1','128','255.255.255.128','0.0.0.127','25',195,110,87,128,195,110,87,1,'-',195,110,87,254,195,110,87,255]
};
const box = (cls, w, t) => `<div class="${cls}" style="width:${w}px">${t}</div>`;

document.getElementById('heads').innerHTML =
  `<div class="flex h-full w-[66px] shrink-0 items-end justify-end border-r border-b border-[#b8b8b8] pr-[4px] pb-[3px]"><svg class="h-[27px] w-[27px]" viewBox="0 0 27 27"><path d="M27 0v27H0z" fill="#b2b2b2"/></svg></div>` +
  cols.map(c => box(c === 'E'
    ? 'h-[34px] shrink-0 border-r border-b-[3px] border-r-[#b8b8b8] border-b-[#217346] bg-[#d5d1ce] text-center leading-[32px] font-bold text-[#217346]'
    : 'h-[34px] shrink-0 border-r border-b border-r-[#d4d4d4] border-b-[#b8b8b8] text-center leading-[32px] text-[#606060]', widths[c], c)).join('');

const green = 'shrink-0 border-r-2 border-b-2 border-black bg-[#e2efda] text-center leading-[38px] font-bold text-black';
const red = 'shrink-0 border-r-2 border-b-2 border-black bg-[#fce4d6] text-center leading-[38px] text-black';
const blue = 'shrink-0 border-r-2 border-b-2 border-black bg-[#d9e1f2] text-center leading-[38px] text-black';
const teal = 'shrink-0 border-r-2 border-b-2 border-black bg-[#d6e9ee] text-center leading-[38px] text-black';
const plain = 'shrink-0 border-r border-b border-[#d0d0d0] pl-[4px] leading-[38px] text-black';
const underlined = 'shrink-0 border-r border-b-2 border-r-[#d0d0d0] border-b-black pl-[4px] leading-[38px] text-black';

const titles = ['SUBRED','EQUIPOS','PUERTAS DE<br>ENLACE','DIRECCIONES<br>TOTALES','MÁSCARA','WILDCARD','PREFIJO'];
let html = '';
for (let r = 1; r <= 24; r++) {
  const h = r === 3 ? 82 : (r === 1 || r === 16) ? 39 : 38;
  let cells = box(r === 11
    ? 'flex w-[66px] shrink-0 items-end justify-center border-r-[3px] border-b border-r-[#217346] border-b-[#d0d0d0] bg-[#d5d1ce] pr-[2px] text-[24px] leading-[37px] font-bold font-[\'Open_Sans\',sans-serif] text-[#217346]'
    : 'flex w-[66px] shrink-0 items-end justify-center border-r border-b border-r-[#b8b8b8] border-b-[#d0d0d0] bg-[#f3f3f3] pr-[3px] text-[24px] leading-[37px] font-[\'Open_Sans\',sans-serif] text-[#606060]', 66, `<span class="tracking-[-1.5px]">${r}</span>`);
  if (r === 3) {
    titles.forEach((t, i) => cells += box(green + ' flex items-end justify-center tracking-[-0.4px]', widths[cols[i]], `<span class="-mb-[2px]">${t}</span>`));
    [['IP subred',268],['Rango útil',604],['IP Broadcast',268]].forEach(([t, w]) => cells += box(green + ' flex items-center justify-center pt-[3px] text-[26px] tracking-[0.1px]', w, t));
  } else {
    cols.forEach((c, i) => {
      let cls = plain, t = '';
      if (r === 2 && c !== 'Y') cls = underlined;
      if (r === 2 && c === 'A') t = 'VLSM';
      if (r > 3 && r < 16 && c !== 'Y') {
        cls = i === 0 ? green + ' text-[26px] tracking-[0.4px]' : i < 7 ? green + ' text-[26px] tracking-[-0.1px]' : (i < 11 || i > 19) ? red : (r === 6 && c === 'L') ? teal : blue;
        t = data[r] ? data[r][i] : (c === 'P' ? '-' : '');
      }
      cells += box(cls, widths[c], t);
    });
  }
  html += `<div class="flex w-[2700px] font-['Lato',sans-serif] text-[25px] tracking-[-0.2px]" style="height:${h}px">${cells}</div>`;
}
document.getElementById('grid').innerHTML = html;

// Tracks each label so that it spans its nominal width.
function fitLabels() {
  const labels = [...document.querySelectorAll('[data-w]')];
  labels.forEach(el => { el.style.whiteSpace = 'pre'; el.style.letterSpacing = '0px'; });
  const natural = labels.map(el => {
    const range = document.createRange();
    range.selectNodeContents(el);
    return range.getBoundingClientRect().width;
  });
  labels.forEach((el, i) => {
    el.style.letterSpacing = ((el.dataset.w - natural[i]) / el.textContent.length) + 'px';
  });
}
fitLabels();
window.addEventListener('load', fitLabels);
document.fonts.ready.then(fitLabels);
[50, 150, 400].forEach(ms => setTimeout(fitLabels, ms));
</script>
</body>
</html>
